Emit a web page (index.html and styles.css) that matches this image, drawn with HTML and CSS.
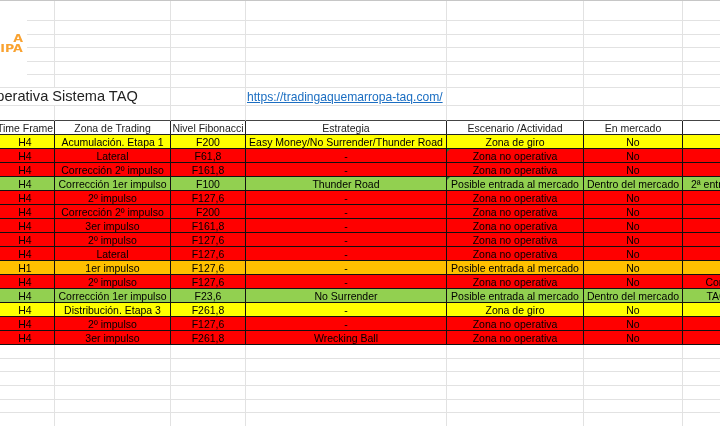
FILE: index.html
```html
<!DOCTYPE html>
<html lang="es">
<head>
<meta charset="utf-8">
<title>Operativa Sistema TAQ</title>
<link rel="stylesheet" href="styles.css">
</head>
<body>
<div class="sheet">
  <div class="logo"><span class="logo-line">A</span><span class="logo-line">IPA</span></div>
  <table class="grid">
    <colgroup><col class="c1"><col class="c2"><col class="c3"><col class="c4"><col class="c5"><col class="c6"><col class="c7"></colgroup>
    <tbody>
      <tr class="top0"><td></td><td></td><td></td><td></td><td></td><td></td><td></td></tr>
      <tr class="b14"><td></td><td></td><td></td><td></td><td></td><td></td><td></td></tr>
      <tr class="b13"><td></td><td></td><td></td><td></td><td></td><td></td><td></td></tr>
      <tr class="b14"><td></td><td></td><td></td><td></td><td></td><td></td><td></td></tr>
      <tr class="b13"><td></td><td></td><td></td><td></td><td></td><td></td><td></td></tr>
      <tr class="b13"><td></td><td></td><td></td><td></td><td></td><td></td><td></td></tr>
      <tr class="title"><td colspan="2"><div class="name">Operativa Sistema TAQ</div></td><td></td><td><a class="link" href="#">https://tradingaquemarropa-taq.com/</a></td><td></td><td></td><td></td></tr>
      <tr class="gap"><td></td><td></td><td></td><td></td><td></td><td></td><td></td></tr>
      <tr class="head"><td>Time Frame</td><td>Zona de Trading</td><td>Nivel Fibonacci</td><td>Estrategia</td><td>Escenario /Actividad</td><td>En mercado</td><td></td></tr>
      <tr class="data yellow"><td>H4</td><td>Acumulación. Etapa 1</td><td>F200</td><td>Easy Money/No Surrender/Thunder Road</td><td>Zona de giro</td><td>No</td><td></td></tr>
      <tr class="data red"><td>H4</td><td>Lateral</td><td>F61,8</td><td>-</td><td class="flag">Zona no operativa</td><td>No</td><td></td></tr>
      <tr class="data red"><td>H4</td><td>Corrección 2º impulso</td><td>F161,8</td><td>-</td><td>Zona no operativa</td><td>No</td><td></td></tr>
      <tr class="data green"><td>H4</td><td>Corrección 1er impulso</td><td>F100</td><td>Thunder Road</td><td class="flag">Posible entrada al mercado</td><td>Dentro del mercado</td><td>2ª entrada al mercado</td></tr>
      <tr class="data red"><td>H4</td><td>2º impulso</td><td>F127,6</td><td>-</td><td>Zona no operativa</td><td>No</td><td></td></tr>
      <tr class="data red"><td>H4</td><td>Corrección 2º impulso</td><td>F200</td><td>-</td><td>Zona no operativa</td><td>No</td><td></td></tr>
      <tr class="data red"><td>H4</td><td>3er impulso</td><td>F161,8</td><td>-</td><td>Zona no operativa</td><td>No</td><td></td></tr>
      <tr class="data red"><td>H4</td><td>2º impulso</td><td>F127,6</td><td>-</td><td>Zona no operativa</td><td>No</td><td></td></tr>
      <tr class="data red"><td>H4</td><td>Lateral</td><td>F127,6</td><td>-</td><td>Zona no operativa</td><td>No</td><td></td></tr>
      <tr class="data orange"><td>H1</td><td>1er impulso</td><td>F127,6</td><td>-</td><td>Posible entrada al mercado</td><td>No</td><td></td></tr>
      <tr class="data red"><td>H4</td><td>2º impulso</td><td>F127,6</td><td>-</td><td>Zona no operativa</td><td>No</td><td>Corrección 1er i</td></tr>
      <tr class="data green"><td>H4</td><td>Corrección 1er impulso</td><td>F23,6</td><td>No Surrender</td><td>Posible entrada al mercado</td><td>Dentro del mercado</td><td>TAQ 1er impuls</td></tr>
      <tr class="data yellow"><td>H4</td><td>Distribución. Etapa 3</td><td>F261,8</td><td>-</td><td>Zona de giro</td><td>No</td><td></td></tr>
      <tr class="data red"><td>H4</td><td>2º impulso</td><td>F127,6</td><td>-</td><td>Zona no operativa</td><td>No</td><td></td></tr>
      <tr class="data red"><td>H4</td><td>3er impulso</td><td>F261,8</td><td>Wrecking Ball</td><td>Zona no operativa</td><td>No</td><td></td></tr>
      <tr class="b14"><td></td><td></td><td></td><td></td><td></td><td></td><td></td></tr>
      <tr class="b13"><td></td><td></td><td></td><td></td><td></td><td></td><td></td></tr>
      <tr class="b14"><td></td><td></td><td></td><td></td><td></td><td></td><td></td></tr>
      <tr class="b14"><td></td><td></td><td></td><td></td><td></td><td></td><td></td></tr>
      <tr class="b13"><td></td><td></td><td></td><td></td><td></td><td></td><td></td></tr>
      <tr class="b14"><td></td><td></td><td></td><td></td><td></td><td></td><td></td></tr>
    </tbody>
  </table>
</div>
</body>
</html>
```
FILE: styles.css
```css
html, body {
  margin: 0;
  padding: 0;
  background: #fff;
}
.sheet {
  position: relative;
  width: 720px;
  height: 426px;
  overflow: hidden;
  font-family: "Liberation Sans", Arial, sans-serif;
  font-size: 10.5px;
  color: #000;
  border-top: 1px solid #c6c6c6;
  box-sizing: border-box;
  filter: blur(0.3px);
}
.grid {
  table-layout: fixed;
  border-collapse: separate;
  border-spacing: 0;
  width: 807px;
  margin-left: -4px;
}
.c1 { width: 59px; }
.c2 { width: 116px; }
.c3 { width: 75px; }
.c4 { width: 201px; }
.c5 { width: 137px; }
.c6 { width: 99px; }
.c7 { width: 120px; }
td {
  padding: 0;
  border-right: 1px solid #e2e2e2;
  border-bottom: 1px solid #e2e2e2;
  text-align: center;
  white-space: nowrap;
  overflow: hidden;
  box-sizing: border-box;
}
tr.top0 td { height: 20px; }
tr.b14 td { height: 14px; }
tr.b13 td { height: 13px; }
tr.title td {
  height: 18px;
  overflow: visible;
  text-align: left;
}
tr.gap td { height: 15px; border-bottom-color: #444; }
tr.head td {
  height: 14px;
  border-right-color: #222;
  border-bottom-color: #222;
  background: #fff;
  color: #222;
}
tr.data td {
  height: 14px;
  padding-top: 1px;
  border-right-color: #111;
  border-bottom-color: #111;
  line-height: 12px;
}
.yellow td { background: #ffff00; }
.red td { background: #ff0000; }
.green td { background: #92d050; }
.orange td { background: #ffc000; }
td.flag { position: relative; }
td.flag::before {
  content: "";
  position: absolute;
  left: 0;
  top: 0;
  border-top: 3px solid #1d7a35;
  border-right: 3px solid transparent;
}
.name {
  font-size: 14.6px;
  line-height: 17px;
  color: #222;
  margin-left: -11px;
}
.link {
  display: inline-block;
  font-size: 12.1px;
  line-height: 16px;
  padding-top: 1px;
  color: #1b6ec2;
  text-decoration: underline;
  margin-left: 1px;
}
.logo {
  position: absolute;
  left: 0;
  top: 14px;
  width: 27px;
  height: 72px;
  box-sizing: border-box;
  padding: 18px 4px 0 0;
  background: #fff;
  display: flex;
  flex-direction: column;
  align-items: flex-end;
  font-family: "DejaVu Sans", sans-serif;
  font-weight: 700;
  font-size: 10.5px;
  line-height: 10px;
  color: #f9a230;
  overflow: hidden;
}
.logo-line {
  transform: scaleX(1.2);
  transform-origin: right center;
}
```
